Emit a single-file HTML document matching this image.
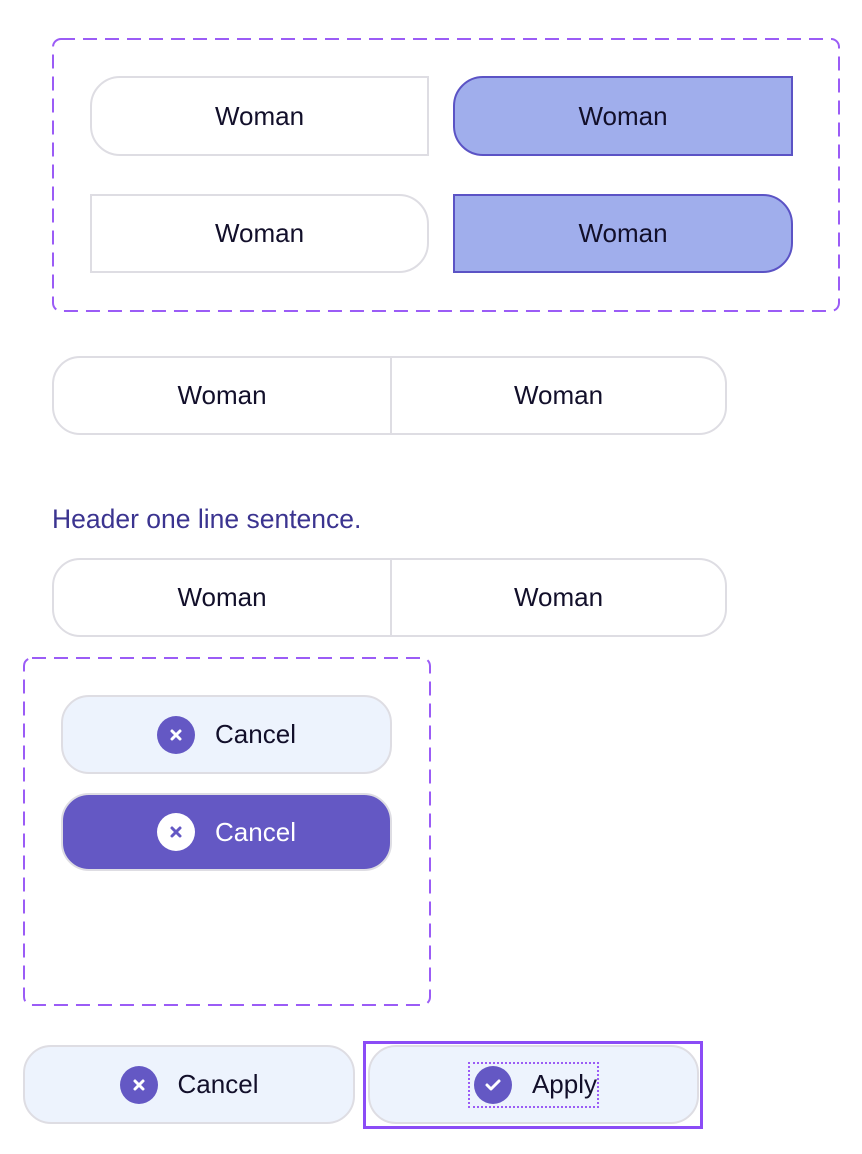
<!DOCTYPE html>
<html><head><style>
body{margin:0;width:862px;height:1154px;background:#fff;font-family:"Liberation Sans",sans-serif;position:relative;overflow:hidden}
.a{position:absolute;box-sizing:border-box}
.b{display:flex;align-items:center;justify-content:center;font-size:26px;color:#120f2a;border:2px solid #dedde3;background:#fff}
.s{background:#a0aeec;border-color:#5b53c5}
.ic{width:38px;height:38px;border-radius:50%;background:#6458c4;display:inline-flex;align-items:center;justify-content:center;margin-right:20px}
.lt{background:#edf3fd}
</style></head><body>
<svg class="a" style="left:0;top:0" width="862" height="1154">
<rect x="53" y="39" width="786" height="272" rx="8" fill="none" stroke="#9b5cf6" stroke-width="2" stroke-dasharray="14 8"/>
<rect x="24" y="658" width="406" height="347" rx="8" fill="none" stroke="#9b5cf6" stroke-width="2" stroke-dasharray="14 8"/>
</svg>
<div class="a b" style="left:90px;top:76px;width:339px;height:80px;border-radius:30px 0 0 30px">Woman</div>
<div class="a b s" style="left:453px;top:76px;width:340px;height:80px;border-radius:30px 0 0 30px">Woman</div>
<div class="a b" style="left:90px;top:194px;width:339px;height:79px;border-radius:0 30px 30px 0">Woman</div>
<div class="a b s" style="left:453px;top:194px;width:340px;height:79px;border-radius:0 30px 30px 0">Woman</div>

<div class="a b" style="left:52px;top:356px;width:675px;height:79px;border-radius:28px;justify-content:flex-start;padding:0">
<div style="width:336px;text-align:center;border-right:2px solid #dedde3;height:100%;display:flex;align-items:center;justify-content:center">Woman</div>
<div style="flex:1;text-align:center">Woman</div></div>

<div class="a" style="left:52px;top:504px;font-size:26.5px;color:#3b3490">Header one line sentence.</div>
<div class="a b" style="left:52px;top:558px;width:675px;height:79px;border-radius:28px;justify-content:flex-start;padding:0">
<div style="width:336px;text-align:center;border-right:2px solid #dedde3;height:100%;display:flex;align-items:center;justify-content:center">Woman</div>
<div style="flex:1;text-align:center">Woman</div></div>

<div class="a b lt" style="left:61px;top:695px;width:331px;height:79px;border-radius:28px"><span class="ic"><svg width="16" height="16" viewBox="0 0 16 16"><path d="M4 4L12 12M12 4L4 12" stroke="#fff" stroke-width="3" stroke-linecap="round"/></svg></span>Cancel</div>
<div class="a b" style="left:61px;top:793px;width:331px;height:78px;border-radius:28px;background:#6458c4;color:#fff"><span class="ic" style="background:#fff"><svg width="16" height="16" viewBox="0 0 16 16"><path d="M4 4L12 12M12 4L4 12" stroke="#6458c4" stroke-width="3" stroke-linecap="round"/></svg></span>Cancel</div>

<div class="a b lt" style="left:23px;top:1045px;width:332px;height:79px;border-radius:28px"><span class="ic"><svg width="16" height="16" viewBox="0 0 16 16"><path d="M4 4L12 12M12 4L4 12" stroke="#fff" stroke-width="3" stroke-linecap="round"/></svg></span>Cancel</div>
<div class="a" style="left:363px;top:1041px;width:340px;height:88px;border:3px solid #8b4cf6"></div>
<div class="a b lt" style="left:368px;top:1045px;width:331px;height:79px;border-radius:28px"><span style="display:inline-flex;align-items:center;outline:2px dotted #9b5cf6;padding:2px 0 2px 4px"><span class="ic"><svg width="20" height="16" viewBox="0 0 20 16"><path d="M4 8L8 12L16 4" stroke="#fff" stroke-width="3" fill="none" stroke-linecap="round" stroke-linejoin="round"/></svg></span>Apply</span></div>
</body></html>
